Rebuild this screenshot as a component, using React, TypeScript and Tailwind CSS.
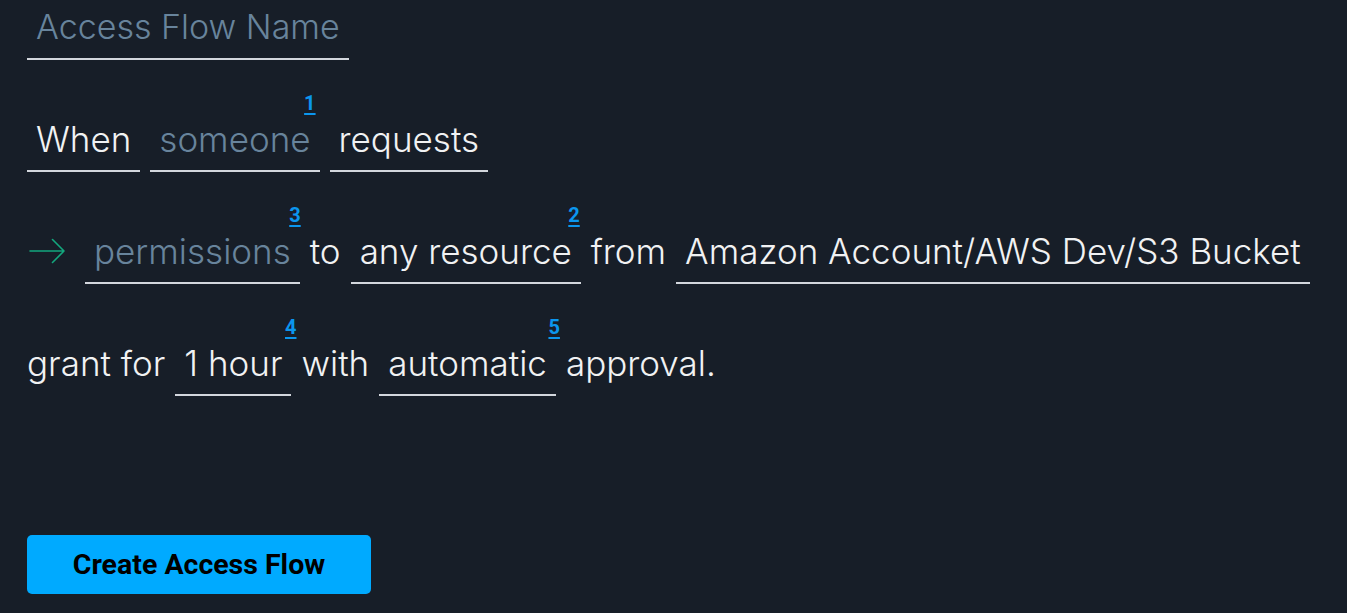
import React from "react";

type Piece =
  | { kind: "text"; text: string }
  | { kind: "slot"; text: string; placeholder?: boolean; sup?: string; supPos?: string }
  | { kind: "arrow" };

const rows: Piece[][] = [
  [
    { kind: "slot", text: "When" },
    { kind: "slot", text: "someone", placeholder: true, sup: "1", supPos: "right-[4px]" },
    { kind: "slot", text: "requests" },
  ],
  [
    { kind: "arrow" },
    { kind: "slot", text: "permissions", placeholder: true, sup: "3", supPos: "right-[-1px]" },
    { kind: "text", text: "to" },
    { kind: "slot", text: "any resource", sup: "2", supPos: "right-[1px]" },
    { kind: "text", text: "from" },
    { kind: "slot", text: "Amazon Account/AWS Dev/S3 Bucket" },
  ],
  [
    { kind: "text", text: "grant for" },
    { kind: "slot", text: "1 hour", sup: "4", supPos: "right-[-5px]" },
    { kind: "text", text: "with" },
    { kind: "slot", text: "automatic", sup: "5", supPos: "right-[-4px]" },
    { kind: "text", text: "approval." },
  ],
];

const Arrow = () => (
  <div className="flex h-[44px] w-[48px] items-center">
    <svg width="48" height="26" viewBox="0 0 48 26" fill="none">
      <path
        d="M3 13 H37 M25.5 1.5 L37 13 L25.5 24.5"
        stroke="#13a77d"
        strokeWidth="1.6"
        strokeLinecap="round"
        strokeLinejoin="round"
      />
    </svg>
  </div>
);

const Slot: React.FC<{ text: string; placeholder?: boolean; sup?: string; supPos?: string }> = ({
  text,
  placeholder,
  sup,
  supPos,
}) => (
  <div className="relative border-b-2 border-[#d3d7dd] px-[9px] pb-[9px]">
    <span className={placeholder ? "text-[#68849c]" : "text-[#f1f2f3]"}>{text}</span>
    {sup && (
      <span
        className={`absolute top-[-24px] font-['Roboto',sans-serif] text-[20px] leading-[20px] font-bold text-[#0b96ee] underline decoration-2 underline-offset-[3px] ${supPos}`}
      >
        {sup}
      </span>
    )}
  </div>
);

export default function App() {
  return (
    <div className="min-h-screen bg-[#171e28] px-[27px] pt-[5px] font-['Inter',sans-serif] text-[35px] leading-[44px] font-light">
      <div className="w-[322px] border-b-2 border-[#d3d7dd] px-[9px] pb-[9px] text-[34px] text-[#68849c]">
        Access Flow Name
      </div>

      <div className="mt-[57px] flex flex-col gap-[57px]">
        {rows.map((row, i) => (
          <div key={i} className="flex items-start gap-[10px]">
            {row.map((p, j) =>
              p.kind === "arrow" ? (
                <Arrow key={j} />
              ) : p.kind === "text" ? (
                <span key={j} className="text-[#f1f2f3]">
                  {p.text}
                </span>
              ) : (
                <Slot key={j} text={p.text} placeholder={p.placeholder} sup={p.sup} supPos={p.supPos} />
              )
            )}
          </div>
        ))}
      </div>

      <button className="mt-[139px] h-[59px] w-[344px] rounded-[5px] bg-[#00aaff] font-['Roboto',sans-serif] text-[28.5px] font-bold text-black">
        Create Access Flow
      </button>
    </div>
  );
}
